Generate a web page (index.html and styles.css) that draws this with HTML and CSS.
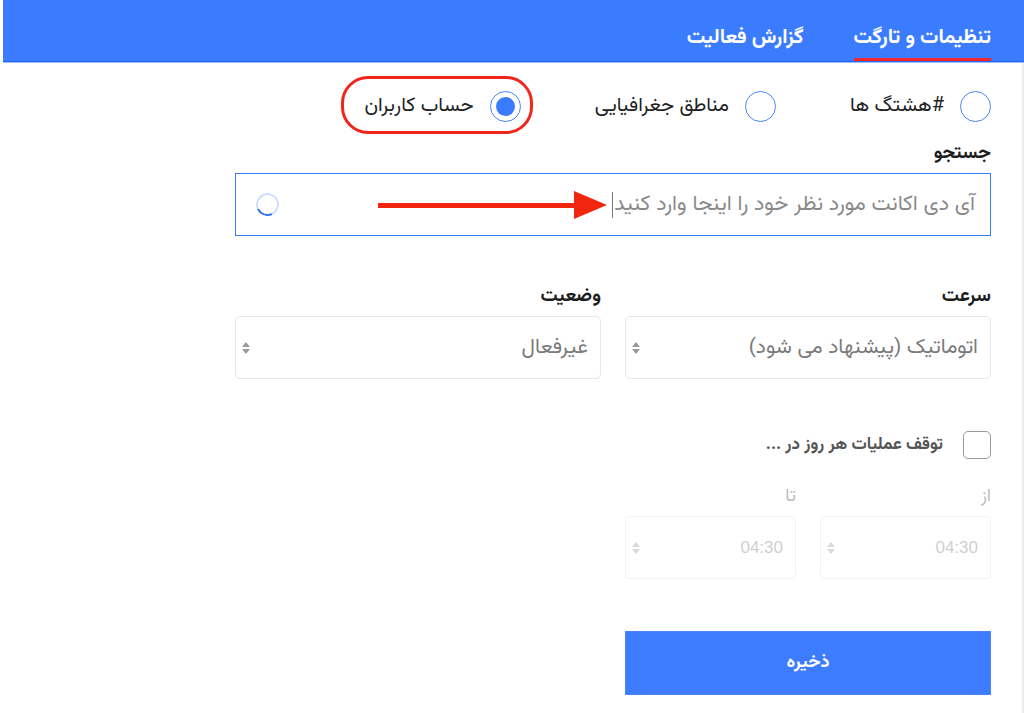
FILE: index.html
```html
<!DOCTYPE html>
<html lang="fa" dir="rtl">
<head>
<meta charset="utf-8">
<title>تنظیمات و تارگت</title>
<link rel="stylesheet" href="styles.css">
</head>
<body>
<div class="page">
  <header class="topbar">
    <nav class="tabs">
      <a class="tab active">تنظیمات و تارگت</a>
      <a class="tab">گزارش فعالیت</a>
    </nav>
  </header>

  <main class="form">
    <div class="radios">
      <label class="radio"><span class="circle"></span><span class="rlabel">#هشتگ ها</span></label>
      <label class="radio"><span class="circle"></span><span class="rlabel">مناطق جغرافیایی</span></label>
      <label class="radio selected annotated"><span class="circle"><span class="dot"></span></span><span class="rlabel">حساب کاربران</span></label>
    </div>

    <div class="field-label search-label">جستجو</div>
    <div class="search">
      <span class="placeholder">آی دی اکانت مورد نظر خود را اینجا وارد کنید</span><span class="caret"></span>
      <span class="spacer"></span>
      <span class="spinner"></span>
      <span class="arrow"><span class="shaft"></span><span class="head"></span></span>
    </div>

    <div class="grid2 selects">
      <div class="col">
        <div class="field-label">سرعت</div>
        <div class="select"><span class="val">اتوماتیک (پیشنهاد می شود)</span><span class="updown"><i class="up"></i><i class="down"></i></span></div>
      </div>
      <div class="col">
        <div class="field-label">وضعیت</div>
        <div class="select"><span class="val">غیرفعال</span><span class="updown"><i class="up"></i><i class="down"></i></span></div>
      </div>
    </div>

    <label class="check"><span class="box"></span><span class="clabel">توقف عملیات هر روز در ...</span></label>

    <div class="grid2 times">
      <div class="grid2 inner">
        <div class="col">
          <div class="field-label faded">از</div>
          <div class="select time"><span class="val">04:30</span><span class="updown"><i class="up"></i><i class="down"></i></span></div>
        </div>
        <div class="col">
          <div class="field-label faded">تا</div>
          <div class="select time"><span class="val">04:30</span><span class="updown"><i class="up"></i><i class="down"></i></span></div>
        </div>
      </div>
    </div>

    <div class="grid2 actions">
      <button class="save">ذخیره</button>
    </div>
  </main>
</div>
</body>
</html>
```

FILE: styles.css
```css
* { box-sizing: border-box; }
html, body { margin: 0; padding: 0; background: #fff; }
body {
  direction: rtl;
  font-family: "Vazirmatn", "Noto Sans Arabic", "DejaVu Sans", sans-serif;
  color: #222;
  width: 1024px;
  height: 713px;
  overflow: hidden;
}
.page {
  width: 1023px;
  height: 713px;
  box-shadow: inset -2px 0 0 #ececec;
  display: flex;
  flex-direction: column;
}
.topbar {
  align-self: flex-start;
  width: 1021px;
  height: 62px;
  background: #3b7cff;
  border-bottom: 1px solid #1f66f5;
  box-shadow: 0 1px 0 #9dbfff;
  padding-right: 33px;
}
.tabs { display: flex; gap: 50px; height: 61px; align-items: flex-end; }
.tab {
  color: #fff;
  font-weight: bold;
  font-size: 20.5px;
  line-height: 24px;
  padding-bottom: 8px;
  border-bottom: 3px solid transparent;
}
.tab.active { border-bottom-color: #f3262a; }

.form {
  align-self: flex-start;
  width: 1021px;
  padding: 29px 33px 0 0;
}
.form > * { width: 756px; }

.radios { display: flex; gap: 74px; height: 30px; align-items: center; }
.radio { display: flex; align-items: center; gap: 16px; position: relative; font-size: 20px; }
.circle {
  width: 31px; height: 31px; border-radius: 50%;
  border: 1.5px solid #4a86f7;
  display: flex; align-items: center; justify-content: center;
  background: #fff;
}
.dot { width: 19px; height: 19px; border-radius: 50%; background: #3b7cff; }
.annotated::after {
  content: "";
  position: absolute;
  top: -14px; bottom: -12px;
  right: -12px; left: -23px;
  border: 3px solid #f0261c;
  border-radius: 27px;
}

.field-label { font-size: 19px; font-weight: bold; line-height: 20px; height: 20px; margin-bottom: 9px; color: #1d1d1d; }
.search-label { margin-top: 23px; }
.faded { color: #bdbdbd; font-weight: normal; font-size: 18px; }

.search {
  position: relative;
  height: 63px;
  border: 1px solid #3b7cff;
  display: flex; align-items: center;
  padding: 0 15px 0 20px;
}
.placeholder { color: #8a8a8a; font-size: 21.5px; white-space: nowrap; }
.caret { width: 1px; height: 26px; background: #777; margin-right: 1px; }
.spacer { flex: 1; }
.spinner {
  width: 23px; height: 23px; border-radius: 50%;
  border: 2px solid #cfdeff;
  border-bottom-color: #2f6ff0;
  transform: rotate(20deg);
}
.arrow {
  position: absolute;
  left: 142px; top: 17px;
  width: 229px; height: 28px;
  display: flex; align-items: center;
  direction: ltr;
}
.shaft { width: 200px; height: 5px; background: #f2260e; }
.head {
  width: 0; height: 0;
  border-top: 14px solid transparent;
  border-bottom: 14px solid transparent;
  border-left: 33px solid #f2260e;
  margin-left: -4px;
}

.grid2 { display: grid; grid-template-columns: 1fr 1fr; column-gap: 24px; }
.selects { margin-top: 51px; }
.select {
  height: 63px;
  border: 1px solid #e6e6e6;
  border-radius: 5px;
  display: flex; align-items: center; justify-content: space-between;
  padding: 0 12px 0 6px;
}
.val { font-size: 21px; color: #7a7a7a; }
.updown { display: flex; flex-direction: column; gap: 2px; }
.updown i { display: block; width: 0; height: 0; border-left: 4px solid transparent; border-right: 4px solid transparent; }
.updown .up { border-bottom: 5px solid #9a9a9a; }
.updown .down { border-top: 5px solid #9a9a9a; }

.check { display: flex; align-items: center; gap: 20px; margin-top: 52px; height: 28px; }
.box { width: 28px; height: 28px; border: 1.5px solid #9a9a9a; border-radius: 5px; }
.clabel { font-size: 17px; color: #555; font-weight: bold; }

.times { margin-top: 28px; }
.inner { width: 366px; }
.time { border-color: #f2f2f2; }
.time .val { font-family: "Liberation Sans", Arial, sans-serif; color: #cfcfcf; font-size: 17px; }
.time .up { border-bottom-color: #d9d9d9; }
.time .down { border-top-color: #d9d9d9; }

.actions { margin-top: 52px; }
.save {
  height: 64px;
  border: 1px solid #4d86fb;
  background: #3d7bff;
  color: #fff;
  font-family: inherit;
  font-weight: bold;
  font-size: 18px;
}
```
